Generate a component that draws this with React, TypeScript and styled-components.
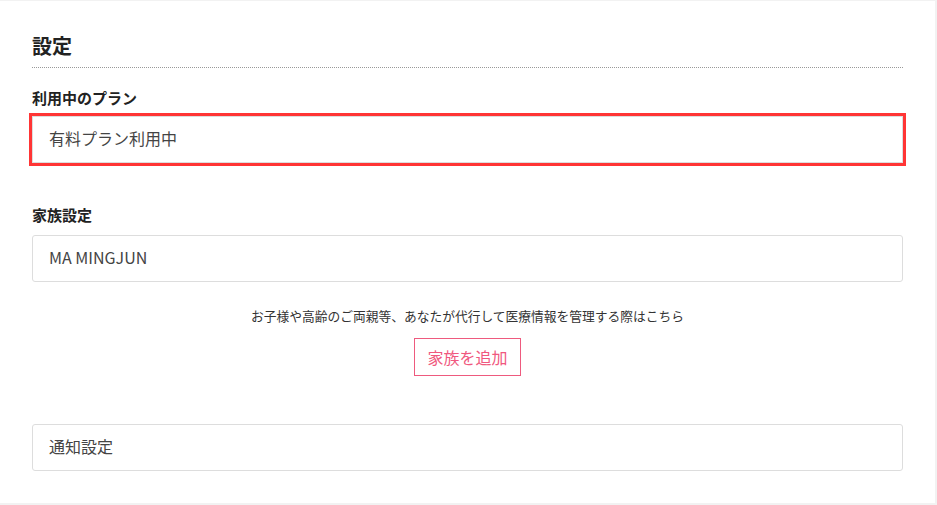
import React from "react";
import styled, { createGlobalStyle } from "styled-components";

const Global = createGlobalStyle`
  html, body {
    margin: 0;
    padding: 0;
    background: #f2f2f2;
  }
  body {
    font-family: "Noto Sans CJK JP", "Noto Sans", sans-serif;
    color: #333;
  }
`;

const Card = styled.main`
  box-sizing: border-box;
  width: 935px;
  height: 502px;
  margin-top: 1px;
  background: #fff;
  padding: 30px 32px 32px;
  display: flex;
  flex-direction: column;
`;

const Title = styled.h1`
  margin: 0;
  font-size: 20px;
  line-height: 30px;
  font-weight: 700;
  color: #222;
  padding-bottom: 6px;
  border-bottom: 1px dotted #999;
`;

const Label = styled.h2<{ $top: number }>`
  margin: ${(p) => p.$top}px 0 0;
  font-size: 15px;
  line-height: 21px;
  font-weight: 700;
  color: #222;
`;

const Field = styled.div<{ $top: number; $highlight?: boolean }>`
  box-sizing: border-box;
  margin-top: ${(p) => p.$top}px;
  height: 47px;
  padding: 10px 16px 12px;
  border: 1px solid #ddd;
  border-radius: ${(p) => (p.$highlight ? "0" : "3px")};
  font-size: 16px;
  line-height: 23px;
  color: #444;
  outline: ${(p) => (p.$highlight ? "3px solid #ff3535" : "none")};
`;

const Note = styled.p`
  margin: 24px 0 0;
  text-align: center;
  font-size: 12.75px;
  line-height: 20px;
  color: #333;
`;

const Center = styled.div`
  display: flex;
  justify-content: center;
  margin-top: 12px;
`;

const AddButton = styled.button`
  box-sizing: border-box;
  height: 38px;
  width: 107px;
  padding: 0;
  background: #fff;
  border: 1px solid #ee5a7e;
  border-radius: 0;
  color: #f0587e;
  font-family: "Noto Sans CJK JP", "Noto Sans", sans-serif;
  font-size: 16px;
  line-height: 36px;
  cursor: pointer;
`;

export default function App() {
  return (
    <>
      <Global />
      <Card>
        <Title>設定</Title>
        <Label $top={19}>利用中のプラン</Label>
        <Field $top={8} $highlight>
          有料プラン利用中
        </Field>
        <Label $top={41}>家族設定</Label>
        <Field $top={10}>MA MINGJUN</Field>
        <Note>
          お子様や高齢のご両親等、あなたが代行して医療情報を管理する際はこちら
        </Note>
        <Center>
          <AddButton>家族を追加</AddButton>
        </Center>
        <Field $top={48}>通知設定</Field>
      </Card>
    </>
  );
}
